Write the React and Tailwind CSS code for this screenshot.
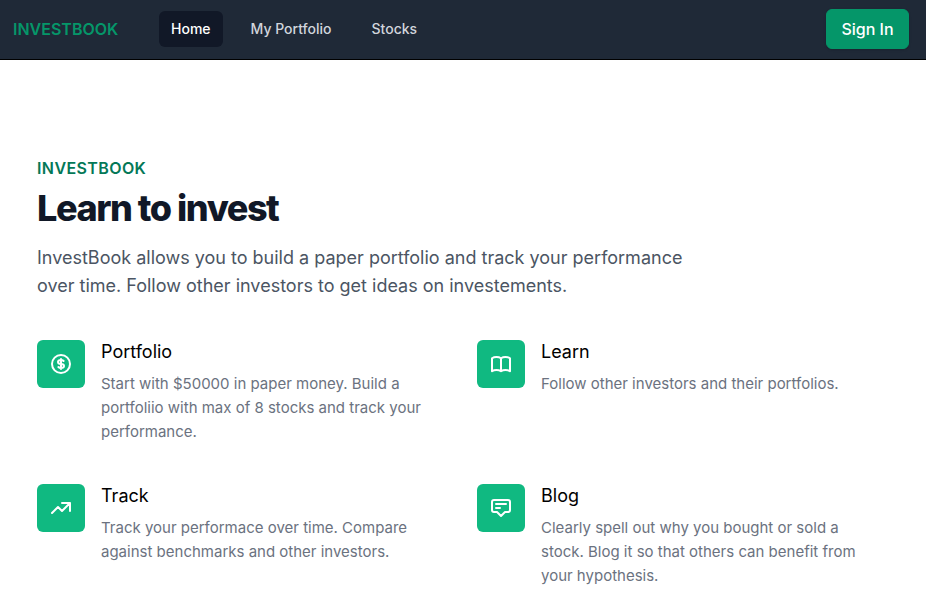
const features = [
  {
    title: 'Portfolio',
    text: 'Start with $50000 in paper money. Build a portfoliio with max of 8 stocks and track your performance.',
    icon: (
      <path d="M12 8c-1.657 0-3 .895-3 2s1.343 2 3 2 3 .895 3 2-1.343 2-3 2m0-8c1.11 0 2.08.402 2.599 1M12 8V7m0 1v8m0 0v1m0-1c-1.11 0-2.08-.402-2.599-1M21 12a9 9 0 11-18 0 9 9 0 0118 0z" />
    ),
  },
  {
    title: 'Learn',
    text: 'Follow other investors and their portfolios.',
    icon: (
      <path d="M12 6.253v13m0-13C10.832 5.477 9.246 5 7.5 5S4.168 5.477 3 6.253v13C4.168 18.477 5.754 18 7.5 18s3.332.477 4.5 1.253m0-13C13.168 5.477 14.754 5 16.5 5c1.747 0 3.332.477 4.5 1.253v13C19.832 18.477 18.247 18 16.5 18c-1.746 0-3.332.477-4.5 1.253" />
    ),
  },
  {
    title: 'Track',
    text: 'Track your performace over time. Compare against benchmarks and other investors.',
    icon: <path d="M13 7h8m0 0v8m0-8l-8 8-4-4-6 6" />,
  },
  {
    title: 'Blog',
    text: 'Clearly spell out why you bought or sold a stock. Blog it so that others can benefit from your hypothesis.',
    icon: (
      <path d="M7 8h10M7 12h4m1 8l-4-4H5a2 2 0 01-2-2V6a2 2 0 012-2h14a2 2 0 012 2v8a2 2 0 01-2 2h-3l-4 4z" />
    ),
  },
];

const App = () => {
  return (
    <div className="min-h-screen bg-white font-['Inter',sans-serif]">
      <nav className="flex h-[60px] items-center justify-between border-b border-black bg-[#1f2937] pb-px pl-[13px] pr-[17px]">
        <div className="flex items-center">
          <span className="w-[146px] text-base font-semibold text-[#059669]">INVESTBOOK</span>
          <div className="flex items-center gap-4">
            <a className="rounded-md bg-[#111827] px-3 py-2 text-sm font-medium text-white">Home</a>
            <a className="rounded-md px-3 py-2 text-sm font-medium text-gray-300">My Portfolio</a>
            <a className="rounded-md px-3 py-2 text-sm font-medium text-gray-300">Stocks</a>
          </div>
        </div>
        <button className="h-10 w-[83px] rounded-md border border-[#059669] bg-[#059669] text-base font-medium text-white shadow-sm">
          Sign In
        </button>
      </nav>

      <main className="pl-[37px] pr-[41px] pt-[96px]">
        <p className="text-base font-semibold tracking-wide text-[#047857]">INVESTBOOK</p>
        <h1 className="mt-2 text-4xl font-extrabold tracking-[-0.04em] text-[#111827]">Learn to invest</h1>
        <p className="mt-4 max-w-[672px] text-lg leading-7 text-[#4b5563]">
          InvestBook allows you to build a paper portfolio and track your performance over time. Follow other investors to get ideas on investements.
        </p>

        <div className="mt-10 grid grid-cols-2 gap-x-8 gap-y-10">
          {features.map((f) => (
            <div key={f.title} className="flex">
              <div className="flex h-12 w-12 shrink-0 items-center justify-center rounded-md bg-[#10b981]">
                <svg className="h-6 w-6 text-white" fill="none" viewBox="0 0 24 24" stroke="currentColor" strokeWidth="2" strokeLinecap="round" strokeLinejoin="round">
                  {f.icon}
                </svg>
              </div>
              <div className="ml-4">
                <p className="text-lg leading-6 font-normal text-black">{f.title}</p>
                <p className="mt-2 text-[15px] leading-6 text-[#6b7280]">{f.text}</p>
              </div>
            </div>
          ))}
        </div>
      </main>
    </div>
  );
};

export default App;
